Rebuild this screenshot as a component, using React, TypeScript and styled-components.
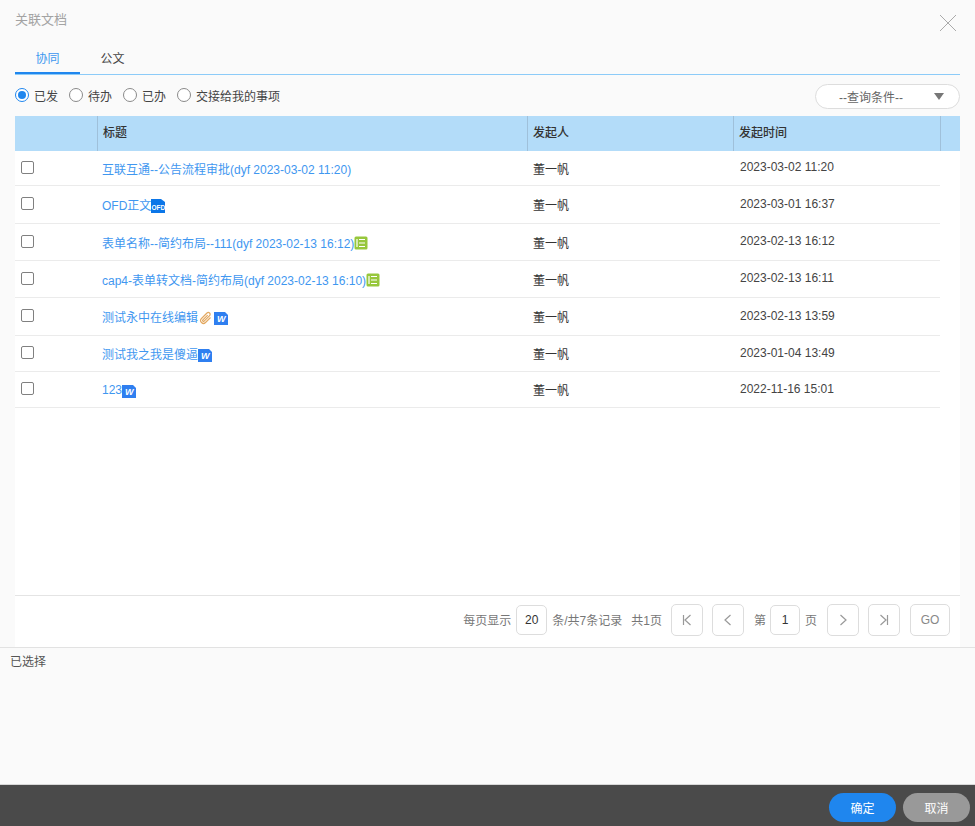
import React from "react";
import styled, { createGlobalStyle } from "styled-components";

const Global = createGlobalStyle`
  html, body { margin: 0; padding: 0; background: #fafafa; }
  body { font-family: "Liberation Sans", "Noto Sans CJK SC", sans-serif; font-size: 12px; color: #333; }
  * { box-sizing: border-box; }
`;

const Page = styled.div`
  width: 975px; height: 826px; display: flex; flex-direction: column; overflow: hidden; background: #fafafa;
`;
const Main = styled.div`
  height: 647px; padding: 0 15px; display: flex; flex-direction: column; flex: none;
`;
const Head = styled.div`
  height: 44px; flex: none; display: flex; align-items: flex-start; justify-content: space-between; padding-top: 12px;
`;
const Title = styled.div`
  font-size: 13px; line-height: 16px; color: #a3a3a3;
`;
const Close = styled.svg`
  width: 18px; height: 18px; margin: 2px 3px 0 0; stroke: #aaa; fill: none;
`;
const Tabs = styled.div`
  height: 31px; flex: none; display: flex; border-bottom: 1px solid #8ccbf8;
`;
const Tab = styled.div<{ $active?: boolean }>`
  width: 65px; height: 30px; line-height: 30px; text-align: center; font-size: 12px;
  color: ${(p) => (p.$active ? "#3d96ef" : "#444")};
  border-bottom: ${(p) => (p.$active ? "2px solid #1f86ee" : "none")};
`;
const FilterBar = styled.div`
  height: 41px; flex: none; display: flex; align-items: center; justify-content: space-between; 
`;
const Radios = styled.div`
  display: flex; align-items: center; gap: 11px; margin-top: -1px;
`;
const RadioItem = styled.label`
  display: flex; align-items: center; gap: 5px; font-size: 12px; color: #444;
`;
const RadioMark = styled.span<{ $on?: boolean }>`
  width: 14px; height: 14px; border-radius: 50%; flex: none; background: #fff;
  border: 1px solid ${(p) => (p.$on ? "#1f86ee" : "#8a8a8a")};
  display: flex; align-items: center; justify-content: center;
  &::after { content: ""; width: 8px; height: 8px; border-radius: 50%; background: ${(p) => (p.$on ? "#1f86ee" : "transparent")}; }
`;
const Search = styled.div`
  width: 145px; height: 25px; margin-top: 1px; border: 1px solid #ddd; border-radius: 13px; background: #fff;
  display: flex; align-items: center; padding: 0 6px 0 23px; color: #666; font-size: 12px;
`;
const SearchText = styled.span`
  width: 80px; flex: none;
`;
const Caret = styled.span`
  width: 0; height: 0; margin-left: 0; margin-right: 9px; margin-left: 15px; flex: none;
  border-left: 5px solid transparent; border-right: 5px solid transparent; border-top: 7px solid #777;
`;
const Grid = styled.div`
  display: grid; grid-template-columns: 82px 430px 206px 207px 20px; 
`;
const TableHead = styled(Grid)`
  height: 35px; flex: none; background: #b3dcf9;
`;
const HeadCell = styled.div<{ $line?: boolean }>`
  padding-left: 5px; line-height: 35px; font-size: 12px; color: #333; font-weight: 500;
  border-left: ${(p) => (p.$line ? "1px solid #9fc0da" : "none")};
`;
const TableBody = styled.div`
  flex: 1; background: #fff; border-bottom: 1px solid #e4e4e4;
`;
const Row = styled(Grid)<{ $h: number }>`
  height: ${(p) => p.$h}px;
`;
const Cell = styled.div`
  display: flex; align-items: center; border-bottom: 1px solid #ebebeb; font-size: 12px; color: #333; padding-left: 6px;
`;
const CheckCell = styled(Cell)`
  padding-left: 6px;
`;
const TitleCell = styled(Cell)`
  padding-left: 5px;
`;
const TimeCell = styled(Cell)`
  padding-left: 7px; color: #444; padding-bottom: 2px;
`;
const EmptyCell = styled.div``;
const Check = styled.span`
  width: 13px; height: 13px; border: 1px solid #808080; border-radius: 2px; background: #fff; margin-top: -2px;
`;
const Link = styled.span`
  color: #3f97f0; font-size: 12px; white-space: nowrap;
`;
const IconSvg = styled.svg`
  width: 14px; height: 14px; flex: none; margin-top: 2px;
`;
const ClipSvg = styled(IconSvg)`
  margin: 2px 1px 0 1px; 
`;
const Pager = styled.div`
  height: 51px; flex: none; background: #fff; display: flex; align-items: center; justify-content: flex-end;
  padding: 0 10px 4px 0; font-size: 12px; color: #777;
`;
const PagerText = styled.span<{ $l?: number; $r?: number }>`
  margin-left: ${(p) => p.$l ?? 0}px; margin-right: ${(p) => p.$r ?? 0}px; white-space: nowrap;
`;
const PageInput = styled.span<{ $w: number }>`
  width: ${(p) => p.$w}px; height: 30px; border: 1px solid #ddd; border-radius: 5px; background: #fff; color: #333;
  display: flex; align-items: center; justify-content: center; font-size: 12px; flex: none;
`;
const PageBtn = styled.span<{ $l?: number; $w?: number }>`
  width: ${(p) => p.$w ?? 32}px; height: 32px; margin-left: ${(p) => p.$l ?? 0}px; border: 1px solid #ddd; border-radius: 5px; background: #fff;
  display: flex; align-items: center; justify-content: center; color: #888; font-size: 12px; flex: none;
`;
const PageIcon = styled.svg`
  width: 14px; height: 14px; stroke: #999; fill: none; stroke-width: 1.2;
`;
const Selected = styled.div`
  flex: 1; border-top: 1px solid #e2e2e2; border-bottom: 1px solid #d8d8d8; padding: 7px 10px; font-size: 12px; line-height: 14px; color: #555;
`;
const Footer = styled.div`
  height: 41px; flex: none; background: #4a4a4a; display: flex; align-items: center; justify-content: flex-end; gap: 7px; padding: 3px 5px 0 0;
`;
const FootBtn = styled.button<{ $primary?: boolean }>`
  width: 67px; height: 29px; border: 0; border-radius: 15px; color: #fff; padding: 0; font: inherit; font-size: 12px;
  background: ${(p) => (p.$primary ? "#1f86ee" : "#999")};
`;

const WordIcon = () => (
  <IconSvg viewBox="0 0 14 14">
    <path d="M0 1h11l3 3v10H0z" fill="#2f7ff0" />
    <text x="3" y="11" fontSize="9" fontWeight="700" fontStyle="italic" fill="#fff" fontFamily="Liberation Sans">W</text>
  </IconSvg>
);
const FormIcon = () => (
  <IconSvg viewBox="0 0 14 14">
    <rect x="0.5" y="0.5" width="13" height="13" rx="1.5" fill="#97c73c" />
    <path d="M3 3v8M5 3.5h6M5 7h6M5 10.500h6" stroke="#fff" strokeWidth="1.2" />
  </IconSvg>
);
const OfdIcon = () => (
  <IconSvg viewBox="0 0 14 14">
    <path d="M0 0h10l4 3v11H0z" fill="#0b76e8" />
    <text x="0.500" y="10.500" fontSize="6.500" fontWeight="700" fill="#fff" fontFamily="Liberation Sans">OFD</text>
  </IconSvg>
);
const ClipIcon = () => (
  <ClipSvg viewBox="0 0 14 14">
    <path d="M11.500 6.500 6.500 11.500a2.800 2.800 0 0 1-4-4l5.500-5.500a1.800 1.800 0 0 1 2.600 2.600l-5.500 5.500a.8.800 0 0 1-1.200-1.200l4.800-4.800" fill="none" stroke="#e3a860" strokeWidth="1.2" />
  </ClipSvg>
);

const rows = [
  { h: 35, t: "互联互通--公告流程审批(dyf 2023-03-02 11:20)", d: "2023-03-02 11:20", i: null },
  { h: 38, t: "OFD正文", d: "2023-03-01 16:37", i: <OfdIcon /> },
  { h: 37, t: "表单名称--简约布局--111(dyf 2023-02-13 16:12)", d: "2023-02-13 16:12", i: <FormIcon /> },
  { h: 37, t: "cap4-表单转文档-简约布局(dyf 2023-02-13 16:10)", d: "2023-02-13 16:11", i: <FormIcon /> },
  { h: 38, t: "测试永中在线编辑", d: "2023-02-13 13:59", i: <><ClipIcon /><WordIcon /></> },
  { h: 36, t: "测试我之我是傻逼", d: "2023-01-04 13:49", i: <WordIcon /> },
  { h: 36, t: "123", d: "2022-11-16 15:01", i: <WordIcon /> },
];

export default function App() {
  return (
    <Page>
      <Global />
      <Main>
        <Head>
          <Title>关联文档</Title>
          <Close viewBox="0 0 18 18"><path d="M1 1l16 16M17 1L1 17" /></Close>
        </Head>
        <Tabs>
          <Tab $active>协同</Tab>
          <Tab>公文</Tab>
        </Tabs>
        <FilterBar>
          <Radios>
            <RadioItem><RadioMark $on />已发</RadioItem>
            <RadioItem><RadioMark />待办</RadioItem>
            <RadioItem><RadioMark />已办</RadioItem>
            <RadioItem><RadioMark />交接给我的事项</RadioItem>
          </Radios>
          <Search>
            <SearchText>--查询条件--</SearchText>
            <Caret />
            <svg width="14" height="14" viewBox="0 0 14 14" fill="none" stroke="#aaa" strokeWidth="1.2">
              <circle cx="6" cy="6" r="4.800" />
              <path d="M9.500 9.500L13 13" />
            </svg>
          </Search>
        </FilterBar>
        <TableHead>
          <HeadCell />
          <HeadCell $line>标题</HeadCell>
          <HeadCell $line>发起人</HeadCell>
          <HeadCell $line>发起时间</HeadCell>
          <HeadCell $line />
        </TableHead>
        <TableBody>
          {rows.map((r) => (
            <Row key={r.d} $h={r.h}>
              <CheckCell><Check /></CheckCell>
              <TitleCell><Link>{r.t}</Link>{r.i}</TitleCell>
              <Cell>董一帆</Cell>
              <TimeCell>{r.d}</TimeCell>
              <EmptyCell />
            </Row>
          ))}
        </TableBody>
        <Pager>
          <PagerText $r={5}>每页显示</PagerText>
          <PageInput $w={31}>20</PageInput>
          <PagerText $l={5}>条/共7条记录</PagerText>
          <PagerText $l={9}>共1页</PagerText>
          <PageBtn $l={9}><PageIcon viewBox="0 0 14 14"><path d="M3.500 2v10M10.500 2L5 7l5.500 5" /></PageIcon></PageBtn>
          <PageBtn $l={9}><PageIcon viewBox="0 0 14 14"><path d="M9.500 2L4 7l5.500 5" /></PageIcon></PageBtn>
          <PagerText $l={10} $r={4}>第</PagerText>
          <PageInput $w={30}>1</PageInput>
          <PagerText $l={5}>页</PagerText>
          <PageBtn $l={10}><PageIcon viewBox="0 0 14 14"><path d="M4.500 2L10 7l-5.500 5" /></PageIcon></PageBtn>
          <PageBtn $l={9}><PageIcon viewBox="0 0 14 14"><path d="M10.500 2v10M3.500 2L9 7l-5.500 5" /></PageIcon></PageBtn>
          <PageBtn $l={10} $w={40}>GO</PageBtn>
        </Pager>
      </Main>
      <Selected>已选择</Selected>
      <Footer>
        <FootBtn $primary>确定</FootBtn>
        <FootBtn>取消</FootBtn>
      </Footer>
    </Page>
  );
}
